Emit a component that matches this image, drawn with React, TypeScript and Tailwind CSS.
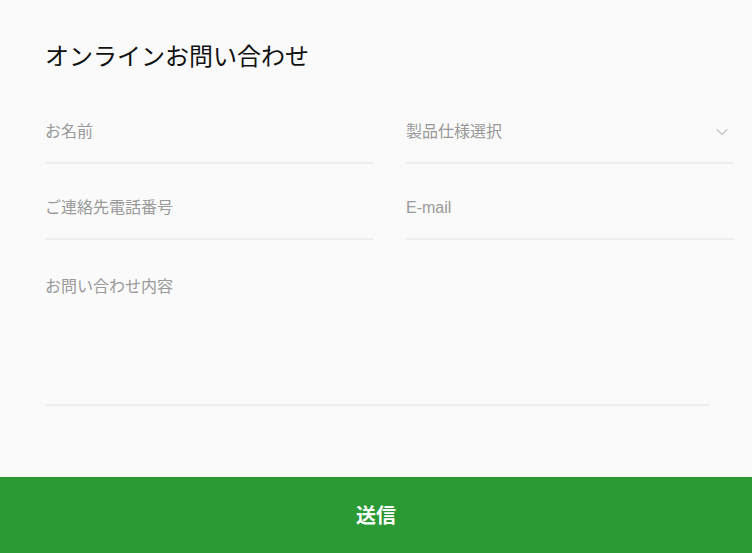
import { ChevronDown } from "lucide-react";

const FONT = "font-['Liberation_Sans','Noto_Sans_CJK_JP',sans-serif]";

// Single line input with underline
const Field = ({ label, select = false }: { label: string; select?: boolean }) => (
    <div className="flex h-[64px] items-center justify-between border-b-2 border-[#eeeeee] pt-[2px]">
        <span className="text-[16px] text-[#999999]">{label}</span>
        {select && <ChevronDown className="mr-[2px] h-[20px] w-[20px] text-[#999999]" strokeWidth={1.2} />}
    </div>
);

export default function App() {
    return (
        <div className={`flex min-h-[553px] w-full flex-col bg-[#fafafa] ${FONT}`}>
            <section className="flex-1 pl-[45px] pr-[18px] pt-[41px]">
                <h2 className="text-[24px] leading-[32px] text-[#111111]">オンラインお問い合わせ</h2>

                <form className="mt-[27px]">
                    <div className="grid grid-cols-2 gap-x-[33px] gap-y-[12px]">
                        <Field label="お名前" />
                        <Field label="製品仕様選択" select />
                        <Field label="ご連絡先電話番号" />
                        <Field label="E-mail" />
                    </div>

                    {/* Message */}
                    <div className="mr-[24px] mt-[22px] h-[144px] border-b-2 border-[#eeeeee] pt-[13px]">
                        <span className="text-[16px] text-[#999999]">お問い合わせ内容</span>
                    </div>
                </form>
            </section>

            <button className="flex h-[76px] w-full items-center justify-center bg-[#2c9a34] pt-[2px] text-[20px] font-bold text-white">
                送信
            </button>
        </div>
    );
}
